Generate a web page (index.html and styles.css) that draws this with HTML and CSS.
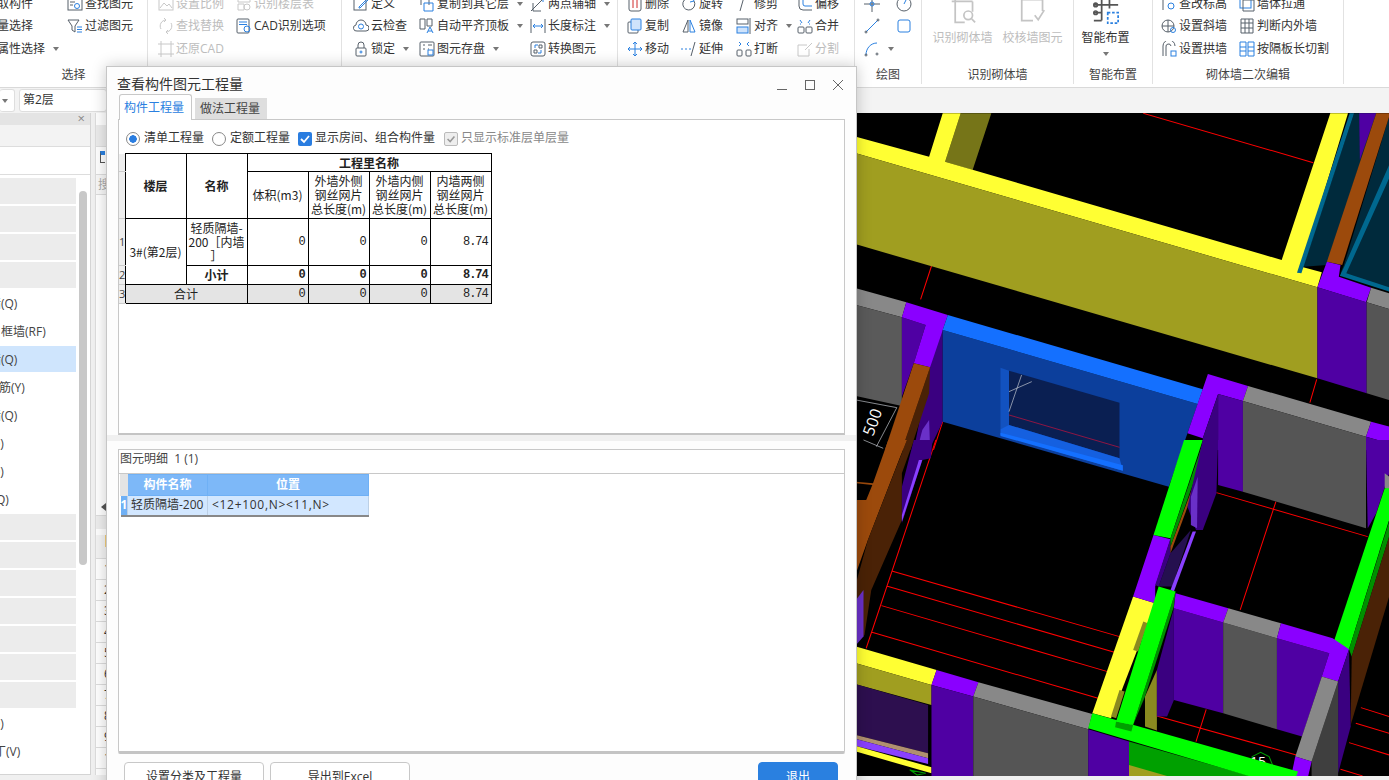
FILE: index.html
```html
<!DOCTYPE html>
<html lang="zh">
<head>
<meta charset="utf-8">
<title>查看构件图元工程量</title>
<link rel="stylesheet" href="styles.css">
</head>
<body>
<div class="app">
  <header class="ribbon">
    <section class="group g1">
      <div class="tools">
        <div class="it"><span>取构件</span></div>
        <div class="it"><span>量选择</span></div>
        <div class="it"><span>属性选择</span><i class="caret"></i></div>
        <div class="it"><svg class="ic" viewBox="0 0 16 16"><rect x="1" y="3" width="14" height="11"/><circle class="b" cx="10" cy="10" r="2.5"/><path d="M3 6h5M3 9h3"/></svg><span>查找图元</span></div>
        <div class="it"><svg class="ic" viewBox="0 0 16 16"><path d="M1 2h11L8 8v6L5 12V8z"/><path class="b" d="M10 9h5M10 11.500h5M10 14h5"/></svg><span>过滤图元</span></div>
        <div class="it"></div>
      </div>
      <div class="label">选择</div>
    </section>
    <section class="group g2">
      <div class="tools">
        <div class="it off"><svg class="ic" viewBox="0 0 16 16"><rect x="1" y="2" width="14" height="12"/><path d="M2 12l4-5 3 3 2-2 3 4"/></svg><span>设置比例</span></div>
        <div class="it off"><svg class="ic" viewBox="0 0 16 16"><path d="M3 11A6 6 0 0 1 8 2M13 5a6 6 0 0 1-5 9M6 0l2 2-2 2M10 12l-2 2 2 2"/></svg><span>查找替换</span></div>
        <div class="it off"><svg class="ic" viewBox="0 0 16 16"><path d="M0 3h16M3 0v16M0 13h16M13 0v16"/></svg><span>还原CAD</span></div>
        <div class="it off"><svg class="ic" viewBox="0 0 16 16"><path d="M2 2h12v4H2zM2 8h6v6H2z"/><circle cx="11" cy="11" r="3"/></svg><span>识别楼层表</span></div>
        <div class="it"><svg class="ic" viewBox="0 0 16 16"><rect x="1" y="1" width="12" height="14" rx="1"/><path class="b" d="M3 4h8M3 6.500h8"/><circle class="b" cx="11" cy="11" r="3"/></svg><span>CAD识别选项</span></div>
        <div class="it"></div>
      </div>
      <div class="label"></div>
    </section>
    <section class="group g3">
      <div class="tools">
        <div class="it"><svg class="ic" viewBox="0 0 16 16"><rect x="1" y="2" width="12" height="12"/><path class="b" d="M6 11l8-8 1 1-8 8H6z"/></svg><span>定义</span></div>
        <div class="it"><svg class="ic" viewBox="0 0 16 16"><path d="M4 13a3 3 0 0 1-1-6 5 5 0 0 1 10 0 3 3 0 0 1 0 6z"/><circle class="b" cx="8" cy="8.500" r="2.500"/></svg><span>云检查</span></div>
        <div class="it"><svg class="ic" viewBox="0 0 16 16"><rect x="3" y="7" width="10" height="8" rx="1"/><path d="M5 7V4a3 3 0 0 1 6 0v3"/><circle class="b" cx="8" cy="11" r="1"/></svg><span>锁定</span><i class="caret"></i></div>
        <div class="it"><svg class="ic" viewBox="0 0 16 16"><path d="M2 9V3h8v6"/><path class="b" d="M5 7h9v8H5z"/></svg><span>复制到其它层</span><i class="caret"></i></div>
        <div class="it"><svg class="ic" viewBox="0 0 16 16"><path d="M1 1h5v10H1zM8 1h5v7H8z"/><path class="b" d="M8 15l3-6 3 6M9 13h4"/></svg><span>自动平齐顶板</span><i class="caret"></i></div>
        <div class="it"><svg class="ic" viewBox="0 0 16 16"><rect x="1" y="1" width="14" height="14" rx="1"/><path d="M4 4h2M9 4h4M4 8h2M9 8h1"/><rect class="b" x="9" y="9" width="5" height="5"/></svg><span>图元存盘</span><i class="caret"></i></div>
        <div class="it"><svg class="ic" viewBox="0 0 16 16"><path d="M1 15L13 3M3 7v8h8"/><path class="b" d="M13 1v5"/></svg><span>两点辅轴</span><i class="caret"></i></div>
        <div class="it"><svg class="ic" viewBox="0 0 16 16"><path d="M1 1v14M15 1v14"/><path class="b" d="M3 8h10M5 6L3 8l2 2M11 6l2 2-2 2"/></svg><span>长度标注</span><i class="caret"></i></div>
        <div class="it"><svg class="ic" viewBox="0 0 16 16"><rect x="1" y="1" width="14" height="14" rx="2"/><path class="b" d="M5 7V4h3M11 9v3H8"/><path d="M4 9h3v3H4zM9 4h3v3H9z"/></svg><span>转换图元</span></div>
      </div>
      <div class="label"></div>
    </section>
    <section class="group g4">
      <div class="tools">
        <div class="it"><svg class="ic" viewBox="0 0 16 16"><rect x="2" y="1" width="12" height="14" rx="2"/><path class="r" d="M6 4v8M10 4v8"/></svg><span>删除</span></div>
        <div class="it"><svg class="ic" viewBox="0 0 16 16"><rect x="1" y="4" width="10" height="11" rx="1"/><rect class="bf" x="4" y="1" width="10" height="11" rx="1"/></svg><span>复制</span></div>
        <div class="it"><svg class="ic" viewBox="0 0 16 16"><path class="b" d="M8 1v14M1 8h14M6 3l2-2 2 2M6 13l2 2 2-2M3 6L1 8l2 2M13 6l2 2-2 2"/></svg><span>移动</span></div>
        <div class="it"><svg class="ic" viewBox="0 0 16 16"><path d="M8 2a6 6 0 1 0 5 3"/><path class="b" d="M11 1l2 4-4 1"/></svg><span>旋转</span></div>
        <div class="it"><svg class="ic" viewBox="0 0 16 16"><path d="M7 2L2 14h5z"/><path class="b" d="M9 2l5 12H9z"/></svg><span>镜像</span></div>
        <div class="it"><svg class="ic" viewBox="0 0 16 16"><path class="b" d="M0 8h2M4 8h2M8 8h2"/><path d="M14 1L10 15"/></svg><span>延伸</span></div>
        <div class="it"><svg class="ic" viewBox="0 0 16 16"><path class="b" d="M1 3h6M10 3h1M13 3h2"/><path d="M8 1L4 15"/></svg><span>修剪</span></div>
        <div class="it"><svg class="ic" viewBox="0 0 16 16"><rect x="1" y="1" width="11" height="5"/><rect class="bf" x="1" y="9" width="11" height="6"/><path d="M14 0v16"/></svg><span>对齐</span><i class="caret"></i></div>
        <div class="it"><svg class="ic" viewBox="0 0 16 16"><rect x="1" y="9" width="5" height="6" rx="1"/><rect x="10" y="9" width="5" height="6" rx="1"/><path class="b" d="M3 1l2 2-2 2M13 1l-2 2 2 2"/></svg><span>打断</span></div>
        <div class="it"><svg class="ic" viewBox="0 0 16 16"><path d="M2 1v9a4 4 0 0 0 4 4h9"/><path class="b" d="M6 1v7a2 2 0 0 0 2 2h7"/></svg><span>偏移</span></div>
        <div class="it"><svg class="ic" viewBox="0 0 16 16"><rect x="1" y="9" width="6" height="6" rx="1"/><rect x="9" y="9" width="6" height="6" rx="1"/><path class="b" d="M3 2l2 3M13 2l-2 3M3 6h1M12 6h1"/></svg><span>合并</span></div>
        <div class="it off"><svg class="ic" viewBox="0 0 16 16"><path d="M1 4h9M1 4v11h11V8M8 9l7-7"/></svg><span>分割</span></div>
      </div>
      <div class="label"></div>
    </section>
    <section class="group g5">
      <div class="tools">
        <div class="it"><svg class="ic" viewBox="0 0 16 16"><path d="M8 0v16M0 8h16"/><circle class="b" cx="8" cy="8" r="2"/></svg></div>
        <div class="it"><svg class="ic" viewBox="0 0 16 16"><path class="b" d="M2 14L14 2"/><circle cx="2" cy="14" r="1"/><circle cx="14" cy="2" r="1"/></svg></div>
        <div class="it"><svg class="ic" viewBox="0 0 16 16"><path class="b" d="M2 14C2 7 7 2 13 2"/><circle cx="2" cy="14" r="1"/><circle cx="13" cy="13" r="1"/></svg><i class="caret"></i></div>
        <div class="it"><svg class="ic" viewBox="0 0 16 16"><circle cx="8" cy="8" r="7"/><path class="b" d="M8 8l2-4"/></svg></div>
        <div class="it"><svg class="ic" viewBox="0 0 16 16"><rect class="b" x="2" y="2" width="12" height="12" rx="2"/></svg></div>
        <div class="it"></div>
      </div>
      <div class="label">绘图</div>
    </section>
    <section class="group g6">
      <div class="bigs">
        <div class="big off"><svg class="bi" viewBox="0 0 30 30"><path d="M2 4h24M6 1v27h11M26 4v12"/><circle cx="21" cy="20" r="5"/><path d="M25 24l4 4"/></svg><span>识别砌体墙</span></div>
        <div class="big off"><svg class="bi" viewBox="0 0 30 30"><path d="M2 2h24v13M2 2v24h13"/><path d="M17 20l4 5 7-11"/></svg><span>校核墙图元</span></div>
      </div>
      <div class="label">识别砌体墙</div>
    </section>
    <section class="group g7">
      <div class="bigs">
        <div class="big smart"><svg class="bi" viewBox="0 0 30 30"><path d="M1 8h28M10 0v26M19 0v12M1 17h9M1 26h9"/><circle cx="3" cy="8" r="2"/><circle cx="3" cy="17" r="2"/><path class="b dash" d="M17 17h12v12H17z"/></svg><span>智能布置</span><i class="caret"></i></div>
      </div>
      <div class="label">智能布置</div>
    </section>
    <section class="group g8">
      <div class="tools">
        <div class="it"><svg class="ic" viewBox="0 0 16 16"><path d="M2 14V2h8"/><circle class="b" cx="10" cy="10" r="3"/></svg><span>查改标高</span></div>
        <div class="it"><svg class="ic" viewBox="0 0 16 16"><circle cx="7" cy="8" r="6"/><path d="M7 2v12M1 8h12"/><circle class="b" cx="12" cy="12" r="2.500"/></svg><span>设置斜墙</span></div>
        <div class="it"><svg class="ic" viewBox="0 0 16 16"><path d="M2 15V5a4 4 0 0 1 12 0M5 15V6a2 2 0 0 1 5-1"/><rect class="b" x="10" y="10" width="5" height="5"/></svg><span>设置拱墙</span></div>
        <div class="it"><svg class="ic" viewBox="0 0 16 16"><rect class="b" x="1" y="1" width="11" height="11"/><path d="M4 4h11v11H4z"/></svg><span>墙体拉通</span></div>
        <div class="it"><svg class="ic" viewBox="0 0 16 16"><path d="M2 1h12v14H2zM6 1v14M10 1v14M2 5h12M2 10h12"/></svg><span>判断内外墙</span></div>
        <div class="it"><svg class="ic" viewBox="0 0 16 16"><path class="b" d="M1 1h6v14H1zM9 1h6v14H9zM1 6h6M1 10h6M9 6h6M9 10h6"/></svg><span>按隔板长切割</span></div>
      </div>
      <div class="label">砌体墙二次编辑</div>
    </section>
  </header>

  <div class="floorbar">
    <div class="field short"><i class="caret"></i></div>
    <div class="field floor">第2层</div>
  </div>

  <main class="work">
    <aside class="tree">
      <div class="tree-head"><span class="x">×</span></div>
      <div class="tree-tab"></div>
      <div class="tree-filter"></div>
      <div class="tree-body">
        <ul class="list">
          <li class="cat"></li><li class="cat"></li><li class="cat"></li><li class="cat"></li>
          <li class="i1">墙(Q)</li>
          <li class="i2">框墙(RF)</li>
          <li class="i1 sel">墙(Q)</li>
          <li class="i3">筋(Y)</li>
          <li class="i1">墙(Q)</li>
          <li class="i4">Q)</li>
          <li class="i4">Q)</li>
          <li class="i5">Q)</li>
          <li class="cat"></li><li class="cat"></li><li class="cat"></li><li class="cat"></li><li class="cat"></li><li class="cat"></li><li class="cat"></li>
          <li class="i4">Q)</li>
          <li class="i6">丁(V)</li>
        </ul>
        <div class="scroll"></div>
      </div>
    </aside>
    <div class="side">
      <div class="side-top">
        <div class="side-head"></div>
        <div class="side-icon"><i class="mark"></i></div>
        <div class="side-row">搜</div>
        <div class="side-fill"><i class="tri"></i></div>
      </div>
      <div class="side-bottom">
        <div class="side-head2"></div>
        <div class="side-head3"><i class="tick"></i></div>
        <div class="num">1</div><div class="num">2</div><div class="num">3</div><div class="num">4</div><div class="num">5</div><div class="num">6</div><div class="num">7</div><div class="num">8</div><div class="num">9</div><div class="num">10</div>
      </div>
    </div>
    <div class="canvas">
      <svg class="scene" viewBox="0 0 533 663">
        <g transform="scale(.34 .3333) translate(0 -9)">
          <path class="red" d="M845 10L1345 158M222 468L190 568M1355 808L1335 878M255 935L228 1020"/>
          <polygon fill="#767518" points="308,10 398,10 343,180 262,155"/>
          <polygon fill="#ffff33" points="255,10 308,10 262,155 1252,450 1395,10 1447,10 1310,470 1370,487 1357,532 0,130 0,80 215,140"/>
          <polygon fill="#a09e20" points="0,130 1357,532 1357,805 0,403"/>
          <polygon fill="#002a3c" points="1465,10 1530,10 1385,465 1315,470"/>
          <polygon fill="#4f00a3" points="1480,10 1530,10 1482,150"/>
          <polygon fill="#00688f" points="1452,10 1465,10 1310,490 1297,488"/>
          <polygon fill="#002a3c" points="1571,10 1568,540 1425,490 1435,465"/>
          <polygon fill="#9c4a0c" points="1530,10 1571,10 1430,465 1385,455"/>
          <polygon fill="#00688f" points="1568,165 1568,205 1442,490 1568,532 1568,545 1423,497 1436,470"/>
          <polygon fill="#8a00ff" points="1385,455 1425,465 1420,500 1515,533 1500,577 1357,532"/>
          <polygon fill="#4f00a3" points="1357,532 1502,577 1502,850 1357,805"/>
          <polygon fill="#888888" points="1515,533 1568,550 1568,597 1502,577"/>
          <polygon fill="#555555" points="1502,577 1568,597 1568,870 1502,850"/>
          <polygon fill="#888888" points="0,535 148,577 135,622 0,585"/>
          <polygon fill="#5a5a5a" points="0,585 135,622 135,888 0,858"/>
          <polygon fill="#4f00a3" points="135,622 205,645 170,760 135,860"/>
          <polygon fill="#3a0080" points="218,700 255,660 255,935 215,1020 170,1020 218,772"/>
          <polygon fill="#6a30c8" points="180,1020 195,960 215,930 218,1020"/>
          <polygon fill="#8a00ff" points="148,577 270,615 218,772 170,760 205,645 135,622"/>
          <polygon fill="#4a2206" points="218,772 215,850 160,1020 135,1020"/>
          <polygon fill="#9c4a0c" points="170,760 218,772 135,1020 85,1020"/>
          <polygon fill="#0c3f9c" points="255,660 1005,882 920,1130 255,935"/>
          <polygon fill="#1470ff" points="270,615 1020,838 1005,882 255,660"/>
          <polygon fill="#0a1f52" points="450,782 775,878 775,1045 450,945"/>
          <polygon fill="#1252c0" points="425,773 450,782 450,950 425,958"/>
          <polygon fill="#1560e0" points="425,958 450,945 775,1045 785,1082 425,975"/>
          <polygon fill="#1470ff" points="425,968 785,1066 785,1082 425,978"/>
          <path class="red thin" d="M450 915L775 1012"/>
          <path class="white" d="M487 795L450 905M450 845L517 815M0 870L120 893M120 893L60 1010M22 990L80 1015"/>
          <polygon fill="#8a00ff" points="1035,792 1153,828 1138,873 1065,852 1020,985 975,970"/>
          <polygon fill="#3a0080" points="1065,852 1065,1020 1020,1020 1020,985"/>
          <polygon fill="#4f00a3" points="1065,852 1138,873 1138,1020 1065,1020"/>
          <polygon fill="#888888" points="1153,828 1515,935 1500,980 1138,873"/>
          <polygon fill="#555555" points="1138,873 1500,980 1500,1020 1138,1020"/>
          <polygon fill="#8a00ff" points="1515,935 1568,950 1568,1000 1500,980"/>
          <polygon fill="#4f00a3" points="1500,980 1568,1000 1568,1020 1500,1020"/>
        </g>
        <g transform="scale(.34 .3333) translate(0 981)">
          <path class="red" d="M235 0L30 625M105 393L775 590M90 438L760 637M75 497L740 695M47 577L712 775M1060 158L1505 290M1235 185L1130 510M885 828L1295 945M1030 808L1000 905M1485 803L1568 830M1470 850L1568 880M1450 908L1568 945M1425 988L1490 1008"/>
          <polygon fill="#9c4a0c" points="95,0 150,0 130,50 35,300 0,400 0,180 30,180 48,135 0,130 0,125 50,130"/>
          <polygon fill="#4a2206" points="150,0 170,0 135,100 135,240 45,450 25,585 0,610 0,430 35,300"/>
          <polygon fill="#3a0080" points="170,0 225,0 220,55 195,60 135,250 135,140"/>
          <polygon fill="#8a40ff" points="185,60 195,60 135,245 135,225"/>
          <polygon fill="#6a30c8" points="0,480 22,450 22,590 0,615"/>
          <polygon fill="#ffff33" points="0,620 237,690 222,735 0,670"/>
          <polygon fill="#a09e20" points="0,670 222,735 222,795 0,733"/>
          <polygon fill="#2d0f4f" points="0,733 212,795 212,940 0,885"/>
          <polygon fill="#b09070" points="0,885 212,940 212,955 0,897"/>
          <polygon fill="#8a40ff" points="0,897 212,955 212,972 0,918"/>
          <polygon fill="#ffff33" points="0,918 222,982 222,1000 0,935"/>
          <polygon fill="#8a00ff" points="237,690 360,727 345,770 222,735"/>
          <polygon fill="#4f00a3" points="222,735 345,770 345,1008 222,1008"/>
          <polygon fill="#888888" points="360,727 695,822 683,868 345,770"/>
          <polygon fill="#555555" points="345,770 683,868 683,1008 345,1008"/>
          <polygon fill="#4f00a3" points="683,868 803,905 803,1008 683,1008"/>
          <polygon fill="#00a000" points="803,905 1160,1008 803,1008"/>
          <polygon fill="#a09e20" points="803,975 915,1008 803,1008"/>
          <polygon fill="#8a8a20" points="850,770 885,690 885,872 850,860"/>
          <polygon fill="#ffff33" points="815,470 880,490 750,835 695,820"/>
          <polygon fill="#8a8a20" points="845,545 858,550 830,635 815,630"/>
          <polygon fill="#8a8a20" points="775,750 790,755 765,835 750,830"/>
          <polygon fill="#3a0080" points="935,505 935,780 915,830 885,830 885,690"/>
          <polygon fill="#009000" points="940,455 935,500 850,770 815,855"/>
          <polygon fill="#25104f" points="985,270 930,440 890,440 925,340"/>
          <polygon fill="#8a00ff" points="875,285 925,298 880,440 880,490 815,470"/>
          <polygon fill="#3a0080" points="925,295 925,340 890,440 880,435"/>
          <polygon fill="#8a40ff" points="990,275 1000,275 935,455 925,450"/>
          <polygon fill="#9c4a0c" points="1020,60 1015,90 925,340 925,320"/>
          <polygon fill="#00ff00" points="965,0 1020,0 925,295 875,285"/>
          <polygon fill="#009000" points="1020,10 1020,50 925,320 925,295"/>
          <polygon fill="#3a0080" points="1020,0 1065,0 1060,160 1020,270 1000,270 975,200"/>
          <polygon fill="#6a30c8" points="985,170 1005,110 1003,265 985,255"/>
          <polygon fill="#4f00a3" points="1065,0 1138,0 1138,155 1065,135"/>
          <polygon fill="#555555" points="1138,0 1500,0 1500,265 1138,155"/>
          <polygon fill="#4f00a3" points="1500,0 1568,0 1568,100 1530,220 1505,265"/>
          <polygon fill="#888888" points="1555,100 1568,110 1568,150 1555,145"/>
          <polygon fill="#00ff00" points="1555,145 1568,145 1568,240 1450,628 1402,615"/>
          <polygon fill="#009000" points="1568,245 1568,290 1458,650 1450,628"/>
          <polygon fill="#4a2206" points="1568,290 1568,470 1455,855 1458,650"/>
          <polygon fill="#4f00a3" points="935,505 1080,548 1080,820 935,780"/>
          <polygon fill="#555555" points="1080,548 1238,595 1238,868 1080,820"/>
          <polygon fill="#4f00a3" points="1238,595 1392,640 1370,710 1312,890 1238,868"/>
          <polygon fill="#8a00ff" points="940,460 1095,505 1080,548 935,505"/>
          <polygon fill="#888888" points="1095,505 1250,550 1238,595 1080,548"/>
          <polygon fill="#8a00ff" points="1250,550 1402,595 1450,628 1418,725 1370,710 1392,640 1238,595"/>
          <polygon fill="#3a0080" points="1450,628 1455,860 1418,1000 1418,725"/>
          <polygon fill="#3f3f3f" points="1418,725 1418,1008 1340,1008 1340,965"/>
          <polygon fill="#888888" points="1370,710 1418,725 1340,965 1292,950"/>
          <polygon fill="#8a00ff" points="1292,950 1340,965 1330,1008 1280,1008"/>
          <polygon fill="none" stroke="#00a000" stroke-width="3" points="1165,950 1190,937 1215,950 1225,975 1200,1000 1170,990"/>
          <polygon fill="none" stroke="#00a000" stroke-width="3" points="158,990 180,1005 205,1000"/>
        </g>
        <text class="dim big-dim" transform="translate(17 324) rotate(-70)">500</text>
        <text class="dim" x="394" y="654">15</text>
        <g transform="scale(.34 .3333) translate(0 981)">
          <polygon fill="#00ff00" points="695,820 1300,995 1295,1008 1155,1008 683,865"/>
          <polygon fill="#00a000" points="765,845 815,855 810,875 762,862"/>
          <polygon fill="#00ff00" points="890,440 940,455 815,855 765,845"/>
        </g>
      </svg>
    </div>
  </main>

  <div class="dialog">
    <div class="dlg-title">
      <span>查看构件图元工程量</span>
      <div class="win">
        <svg class="wb" viewBox="0 0 12 12"><path d="M1 10.500h10"/></svg>
        <svg class="wb" viewBox="0 0 12 12"><rect x="1.500" y="1.500" width="9" height="9"/></svg>
        <svg class="wb" viewBox="0 0 12 12"><path d="M1 1l10 10M11 1L1 11"/></svg>
      </div>
    </div>
    <div class="tabs">
      <div class="tab active">构件工程量</div>
      <div class="tab">做法工程量</div>
    </div>
    <div class="panel upper">
      <div class="opts">
        <span class="radio on"></span><span class="opt o1">清单工程量</span>
        <span class="radio"></span><span class="opt o2">定额工程量</span>
        <span class="check on"><svg viewBox="0 0 14 14"><path d="M3 7l3 3 5-6"/></svg></span><span class="opt o3">显示房间、组合构件量</span>
        <span class="check dis"><svg viewBox="0 0 14 14"><path d="M3 7l3 3 5-6"/></svg></span><span class="opt dis-t">只显示标准层单层量</span>
      </div>
      <table class="qty">
        <colgroup><col class="c0"><col class="c1"><col class="c1"><col class="c1"><col class="c1"><col class="c1"><col class="c1"></colgroup>
        <tr class="r1"><th class="rh"></th><th rowspan="2" class="b">楼层</th><th rowspan="2" class="b">名称</th><th colspan="4" class="b">工程里名称</th></tr>
        <tr class="r2"><th class="rh"></th><th>体积(m3)</th><th>外墙外侧<br>钢丝网片<br>总长度(m)</th><th>外墙内侧<br>钢丝网片<br>总长度(m)</th><th>内墙两侧<br>钢丝网片<br>总长度(m)</th></tr>
        <tr class="r3"><td class="rh">1</td><td rowspan="2" class="ctr">3#(第2层)</td><td class="ctr">轻质隔墙-<br>200［内墙<br>］</td><td class="n">0</td><td class="n">0</td><td class="n">0</td><td class="n">8.74</td></tr>
        <tr class="r4"><td class="rh">2</td><td class="ctr b">小计</td><td class="n b">0</td><td class="n b">0</td><td class="n b">0</td><td class="n b">8.74</td></tr>
        <tr class="r4 tot"><td class="rh">3</td><td colspan="2" class="ctr">合计</td><td class="n">0</td><td class="n">0</td><td class="n">0</td><td class="n">8.74</td></tr>
      </table>
    </div>
    <div class="split"></div>
    <div class="panel lower">
      <div class="detail-head">图元明细&nbsp;&nbsp;1 (1)</div>
      <table class="detail">
        <colgroup><col class="d0"><col class="d1"><col class="d2"></colgroup>
        <tr class="dh"><th class="corner"></th><th>构件名称</th><th>位置</th></tr>
        <tr class="dr"><td class="dn">1</td><td>轻质隔墙-200</td><td class="pos">&lt;12+100,N&gt;&lt;11,N&gt;</td></tr>
      </table>
    </div>
    <div class="btns">
      <button class="btn">设置分类及工程量</button>
      <button class="btn">导出到Excel</button>
      <button class="btn primary">退出</button>
    </div>
  </div>
</div>
</body>
</html>
```
FILE: styles.css
```css
* { box-sizing: border-box; }
html, body { margin: 0; height: 100%; overflow: hidden; }
body { font: 12px/1.2 "Open Sans", "Noto Sans CJK SC", sans-serif; color: #333; background: #f0f0f0; }
.app { position: relative; width: 1389px; height: 780px; overflow: hidden; display: flex; flex-direction: column; }

/* ribbon */
.ribbon { height: 88px; flex: none; display: flex; background: #fff; border-bottom: 1px solid #d9d9d9; overflow: hidden; }
.group { height: 84px; flex: none; display: flex; flex-direction: column; border-right: 1px solid #e2e2e2; }
.tools { flex: 1; display: grid; grid-auto-flow: column; grid-template-rows: repeat(3, 22.5px); margin-top: -7.5px; align-content: start; }
.label { height: 20px; flex: none; text-align: center; line-height: 22px; color: #444; }
.it { display: flex; align-items: center; white-space: nowrap; gap: 2px; }
.it.off { color: #bdbdbd; }
.it.off .ic path, .it.off .ic rect, .it.off .ic circle { stroke: #c8c8c8; }
.ic { width: 16px; height: 16px; flex: none; fill: none; stroke: #57606a; stroke-width: 1; }
.ic .b { stroke: #2a80e0; }
.ic .r { stroke: #d02c2c; }
.ic .bf { stroke: #2a80e0; fill: #cfe3fb; }
.caret { width: 0; height: 0; margin-left: 6px; border: 3px solid transparent; border-top: 4px solid #777; border-bottom: 0; }

.g1 { width: 148px; }
.g1 .tools { grid-template-columns: 67px 80px; margin-left: -3px; }
.g1 .it:nth-child(n+4) { padding-left: 3px; }
.g2 { width: 194px; }
.g2 .tools { grid-template-columns: 78px 105px; padding-left: 10px; }
.g3 { width: 276px; }
.g3 .tools { grid-template-columns: 66px 111px 90px; padding-left: 11px; }
.g4 { width: 237px; }
.g4 .tools { grid-template-columns: 54px 55px 61px 58px; padding-left: 9px; }
.g5 { width: 67px; }
.g5 .tools { grid-template-columns: 32px 30px; padding-left: 9px; }
.g6 { width: 152px; }
.g7 { width: 79px; }
.g8 { width: 191px; }
.g8 .tools { grid-template-columns: 78px 105px; padding-left: 8px; }
.bigs { flex: 1; display: flex; justify-content: center; gap: 9px; margin-top: -2px; }
.g7 .bigs { justify-content: flex-start; padding-left: 1px; }
.big { display: flex; flex-direction: column; align-items: center; gap: 7px; white-space: nowrap; width: 61px; }
.big.off { color: #bdbdbd; }
.big.smart { color: #333; }
.big .caret { margin: 0; }
.bi { width: 30px; height: 26px; flex: none; fill: none; stroke: #c4c4c4; stroke-width: 2; }
.smart .bi { stroke: #555; }
.smart .bi .b { stroke: #2a80e0; }
.smart .bi .dash { stroke-dasharray: 3 2; }

/* floor selector */
.floorbar { height: 25px; flex: none; display: flex; gap: 4px; background: #f3f3f3; padding-top: 1px; }
.field { height: 23px; background: #fff; border: 1px solid #dedede; border-radius: 3px; display: flex; align-items: center; }
.short { width: 15px; border-left: 0; padding-left: 2px; }
.short .caret { margin: 0; }
.floor { width: 88px; padding-left: 3px; }

/* work area */
.work { flex: 1; min-height: 0; display: flex; }
.tree { width: 91px; flex: none; display: flex; flex-direction: column; height: 662px; border-right: 1px solid #d4d4d4; border-bottom: 1px solid #d4d4d4; background: #fff; }
.tree-head { height: 12px; background: #e4e4e4; display: flex; justify-content: flex-end; padding-right: 5px; line-height: 11px; font-size: 13px; color: #888; }
.tree-tab { height: 22px; background: #f3f3f3; border-bottom: 1px solid #ddd; }
.tree-filter { height: 28px; border-bottom: 1px solid #ddd; }
.tree-body { position: relative; flex: 1; overflow: hidden; }
.list { list-style: none; margin: 3px 0 0; padding: 0; width: 76px; overflow: hidden; }
.list li { height: 26px; margin-bottom: 2px; line-height: 28px; white-space: nowrap; color: #444; }
.list .cat { background: #ececec; }
.list .sel { background: #cfe5fd; }
.i1 { text-indent: -11px; }
.i2 { text-indent: 1px; }
.i3 { text-indent: -1px; }
.i4 { text-indent: -9px; }
.i5 { text-indent: -4px; }
.i6 { text-indent: -6px; }
.scroll { position: absolute; left: 79px; top: 16px; width: 8px; height: 374px; border-radius: 4px; background: #c8c8c8; }
.side { width: 15px; flex: none; margin-left: 4px; display: flex; flex-direction: column; height: 662px; background: #fff; }
.side-top { height: 402px; display: flex; flex-direction: column; border-left: 1px solid #ddd; }
.side-head { height: 22px; margin-top: 12px; background: #ececec; border-bottom: 1px solid #ddd; }
.side-icon { height: 28px; border-bottom: 1px solid #ddd; padding: 4px 0 0 4px; }
.mark { display: block; width: 5px; height: 12px; border-left: 1px solid #555; border-bottom: 1px solid #555; border-top: 4px solid #2a80e0; }
.side-row { height: 20px; line-height: 20px; padding-left: 2px; color: #aaa; background: #f8f8f8; border-bottom: 1px solid #ddd; }
.side-fill { flex: 1; position: relative; }
.tri { position: absolute; left: 5px; bottom: 4px; border: 4px solid transparent; border-right: 5px solid #555; border-left: 0; }
.side-bottom { flex: 1; border-left: 1px solid #ddd; border-top: 1px solid #ddd; }
.side-head2 { height: 13px; background: #eee; }
.side-head3 { height: 24px; background: #f4f4f4; border-bottom: 1px solid #ddd; padding-left: 9px; }
.tick { display: block; width: 3px; height: 12px; margin-top: 6px; background: #f4cf7a; }
.num { height: 21px; line-height: 20px; padding-left: 8px; border-bottom: 1px solid #ddd; white-space: nowrap; }
.canvas { width: 533px; height: 663px; margin-left: auto; background: #000; flex: none; }
.scene { display: block; width: 533px; height: 663px; }
.red { fill: none; stroke: #f00; stroke-width: 3; }
.thin { stroke: #d0103c; stroke-width: 2; }
.white { fill: none; stroke: #c8ccd4; stroke-width: 2; }
.dim { fill: #fff; font: 14px "Open Sans", sans-serif; }
.big-dim { font-size: 16px; }

/* dialog */
.dialog { position: absolute; left: 106px; top: 66px; width: 751px; height: 730px; background: #fdfdfd; border: 1px solid #c6c6c6; box-shadow: 0 0 14px rgba(0, 0, 0, .22); display: flex; flex-direction: column; }
.dlg-title { height: 27px; flex: none; display: flex; align-items: flex-end; justify-content: space-between; padding: 0 12px 0 10px; font-size: 14px; color: #333; line-height: 20px; }
.win { display: flex; gap: 16px; padding-bottom: 3px; }
.wb { width: 12px; height: 12px; fill: none; stroke: #666; stroke-width: 1; }
.tabs { height: 25px; flex: none; display: flex; align-items: flex-end; margin-left: 12px; gap: 3px; }
.tab { width: 72px; height: 21px; line-height: 21px; padding-left: 5px; background: #dedede; color: #444; }
.tab.active { width: 73px; height: 26px; line-height: 25px; padding-left: 4px; margin-bottom: -1px; background: #fff; color: #2a80e0; border: 1px solid #c8c8c8; border-bottom: 0; border-radius: 3px 3px 0 0; position: relative; }
.panel { margin-left: 11px; width: 727px; flex: none; background: #fff; border: 1px solid #c8c8c8; }
.upper { height: 316px; border-bottom: 2px solid #c4c4c4; }
.split { height: 14px; flex: none; background: linear-gradient(#f0f0f0 0 6px, #fdfdfd 6px); }
.opts { height: 33px; display: flex; align-items: center; padding: 8px 0 4px 7px; white-space: nowrap; }
.radio { width: 14px; height: 14px; flex: none; border: 1px solid #888; border-radius: 50%; background: #fff; }
.radio.on { background: radial-gradient(circle, #2a7de0 0 3.5px, #fff 4px); }
.opt { margin-left: 4px; color: #333; }
.o1 { margin-right: 8px; }
.o2 { margin-right: 8px; }
.o3 { margin-left: 3px; margin-right: 9px; }
.check { width: 14px; height: 14px; flex: none; border-radius: 2px; }
.check svg { display: block; width: 14px; height: 14px; fill: none; stroke-width: 1.8; }
.check.on { background: #2a7de0; }
.check.on svg { stroke: #fff; }
.check.dis { background: #eee; border: 1px solid #bbb; }
.check.dis svg { width: 12px; height: 12px; stroke: #999; }
.dis-t { margin-left: 3px; color: #888; }
.qty { border-collapse: collapse; table-layout: fixed; width: 372px; font-family: "Noto Sans CJK SC", sans-serif; color: #222; }
.c0 { width: 6px; }
.c1 { width: 61px; }
.qty th, .qty td { border: 1px solid #000; padding: 0; font-weight: 400; line-height: 14px; text-align: center; overflow: hidden; white-space: nowrap; }
.qty .rh { border: 0; border-bottom: 1px solid #ccc; background: #eee; font-family: "Open Sans", sans-serif; font-size: 11px; color: #444; }
.qty .b { font-weight: 700; }
.r1 { height: 18px; }
.r2 { height: 47px; }
.r3 { height: 47px; }
.r4 { height: 19px; }
.qty td.n { text-align: right; padding-right: 3px; font: 12px/14px "Liberation Mono", monospace; letter-spacing: -1.1px; }
.qty td.n.b { font-weight: 700; }
.tot td:not(.rh) { background: #e4e4e4; }
.lower { height: 305px; border-bottom: 3px solid #c4c4c4; border-radius: 0 0 2px 2px; }
.detail-head { height: 24px; line-height: 18px; padding-left: 1px; border-bottom: 1px solid #c8c8c8; color: #444; }
.detail { border-collapse: collapse; table-layout: fixed; width: 248px; margin-left: 1px; border-right: 1px solid #888; border-bottom: 2px solid #888; }
.d0 { width: 7px; }
.d1 { width: 80px; }
.d2 { width: 161px; }
.dh { height: 21px; background: #7db8f8; color: #fff; }
.dh th { font-weight: 700; border: 1px solid #6fb0f5; padding: 0; }
.dh .corner { background: #e4e4e4; border-color: #e4e4e4; }
.dr { height: 20px; background: #d2e7ff; }
.dr td { padding: 0 0 0 3px; white-space: nowrap; overflow: hidden; border-right: 1px solid #bcd0e6; color: #333; }
.dr .dn { background: #6fb0f5; color: #fff; font-weight: 700; padding: 0; text-align: center; }
.dr .pos { padding-left: 4px; letter-spacing: .7px; }
.btns { height: 30px; margin-top: 8px; flex: none; display: flex; padding-left: 17px; gap: 6px; }
.btn { width: 140px; height: 30px; background: #fff; border: 1px solid #c8c8c8; border-radius: 4px; font: inherit; color: #333; padding: 0; }
.primary { width: 80px; margin-left: 342px; background: #2a80e0; border-color: #2a80e0; color: #fff; }
```
